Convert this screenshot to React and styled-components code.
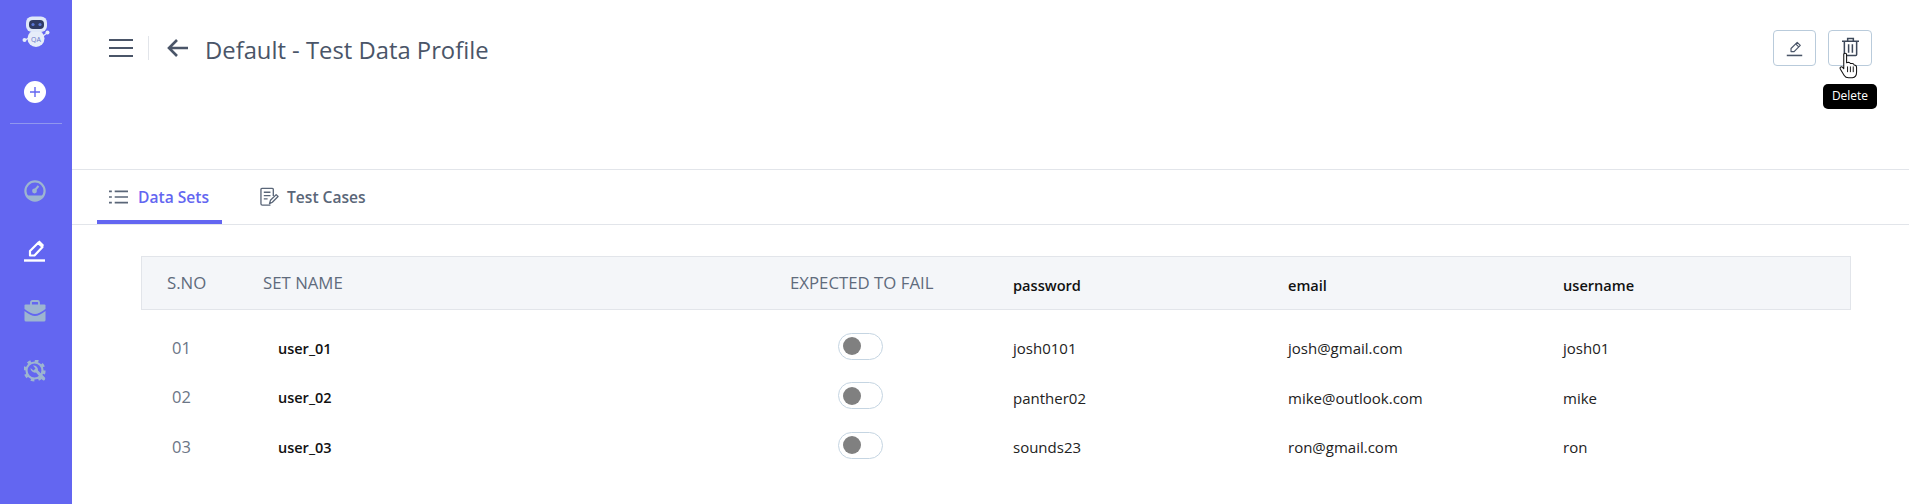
import React from 'react';
import styled, { createGlobalStyle } from 'styled-components';

const GlobalStyle = createGlobalStyle`
  html, body { margin: 0; padding: 0; background: #fff; }
  body { font-family: "Open Sans", "Noto Sans", "Liberation Sans", sans-serif; }
  * { box-sizing: border-box; }
`

const Page = styled.div`
  display: flex;
  width: 1909px;
  height: 504px;
  overflow: hidden;
`

const Sidebar = styled.aside`
  width: 72px;
  flex-shrink: 0;
  background: #6366f1;
  display: flex;
  flex-direction: column;
  align-items: center;
  padding-top: 16px;
`

const Logo = styled.svg`
  width: 34px;
  height: 32px;
  margin-left: 2px;
  display: block;
`

const AddButton = styled.button`
  width: 22px;
  height: 22px;
  border: 0;
  padding: 0;
  margin-top: 33px;
  margin-left: -3px;
  border-radius: 50%;
  background: #fff;
  display: flex;
  align-items: center;
  justify-content: center;
`

const SideDivider = styled.div`
  width: 52px;
  height: 1px;
  margin-top: 20px;
  background: rgba(200, 210, 235, 0.45);
`

const SideNav = styled.nav`
  display: flex;
  flex-direction: column;
  gap: 38px;
  margin-top: 56px;
  margin-left: -3px;
`

const SideIcon = styled.svg`
  width: 22px;
  height: 22px;
  display: block;
  color: ${(p) => (p.$active ? '#ffffff' : '#9db5d0')};
`

const Main = styled.main`
  flex: 1;
  min-width: 0;
  display: flex;
  flex-direction: column;
`

const Header = styled.header`
  height: 170px;
  flex-shrink: 0;
  border-bottom: 1px solid #e2e5ea;
  display: flex;
  align-items: flex-start;
  justify-content: space-between;
  padding: 30px 37px 0 37px;
`

const HeaderLeft = styled.div`
  display: flex;
  align-items: center;
  height: 36px;
`

const Burger = styled.svg`
  width: 24px;
  height: 20px;
  display: block;
`

const HeadDivider = styled.div`
  width: 1px;
  height: 24px;
  margin: 0 18px 0 15px;
  background: #e2e5ea;
`

const BackIcon = styled.svg`
  width: 22px;
  height: 20px;
  display: block;
  margin-right: 16px;
`

const Title = styled.h1`
  margin: 3px 0 0;
  font-size: 23.8px;
  font-weight: 500;
  color: #4a5568;
  white-space: nowrap;
`

const Actions = styled.div`
  display: flex;
  gap: 12px;
`

const ActionWrap = styled.div`
  position: relative;
`

const ActionButton = styled.button`
  width: ${(p) => p.$w}px;
  height: 36px;
  padding: 0;
  background: #fff;
  border: 1px solid #b9cbdb;
  border-radius: 4px;
  display: flex;
  align-items: center;
  justify-content: center;
`

const Tooltip = styled.div`
  position: absolute;
  top: 54px;
  left: -5px;
  width: 54px;
  height: 25px;
  border-radius: 5px;
  background: #000;
  color: #fff;
  font-size: 12px;
  font-weight: 500;
  line-height: 24px;
  text-align: center;
`

const HandCursor = styled.svg`
  position: absolute;
  top: 22px;
  left: 11px;
  width: 19px;
  height: 27px;
`

const Tabs = styled.div`
  height: 55px;
  flex-shrink: 0;
  border-bottom: 1px solid #e2e5ea;
  display: flex;
  padding-left: 25px;
`

const Tab = styled.div`
  height: 54px;
  display: flex;
  align-items: center;
  gap: ${(p) => p.$gap}px;
  padding: 3px 0 0 12px;
  width: ${(p) => p.$w}px;
  margin-right: ${(p) => p.$mr || 0}px;
  font-size: 15.6px;
  font-weight: 600;
  white-space: nowrap;
  color: ${(p) => (p.$active ? '#6366f1' : '#5a6678')};
  border-bottom: 4px solid ${(p) => (p.$active ? '#6366f1' : 'transparent')};
`

const TabIcon = styled.svg`
  width: 19px;
  height: 20px;
  flex-shrink: 0;
`

const TableWrap = styled.section`
  padding: 31px 0 0 69px;
`

const HeadRow = styled.div`
  width: 1710px;
  height: 54px;
  display: grid;
  grid-template-columns: 121px 527px 223px 275px 275px 1fr;
  align-items: center;
  background: #f4f6f9;
  border: 1px solid #e2e5ea;
  margin-bottom: 13px;
`

const HeadCell = styled.div`
  font-size: 16.8px;
  font-weight: 500;
  color: #5f6b7c;
  margin-top: -1px;
  padding-left: ${(p) => p.$pad || 0}px;
`

const KeyCell = styled.div`
  font-size: 14.6px;
  font-weight: 600;
  color: #111;
  margin-top: 3px;
`

const Row = styled.div`
  width: 1710px;
  height: 49.5px;
  display: grid;
  grid-template-columns: 122px 527px 223px 275px 275px 1fr;
  align-items: center;
`

const IndexCell = styled.div`
  padding-left: 31px;
  font-size: 16.5px;
  font-weight: 400;
  color: #6b7686;
  margin-top: -1px;
`

const NameCell = styled.div`
  padding-left: 15px;
  font-size: 14.5px;
  font-weight: 600;
  color: #111;
  margin-top: 1px;
`

const ValueCell = styled.div`
  font-size: 15px;
  font-weight: 500;
  color: #222;
  margin-top: 1px;
`

const ToggleCell = styled.div`
  padding-left: 48px;
  margin-top: -3px;
`

const Toggle = styled.div`
  width: 45px;
  height: 27px;
  border: 1px solid #c5d5e2;
  border-radius: 14px;
  background: #fff;
  display: flex;
  align-items: center;
  padding-left: 4px;
`

const Knob = styled.div`
  width: 18px;
  height: 18px;
  border-radius: 50%;
  background: #808080;
`

const rows = [
  { no: '01', name: 'user_01', password: 'josh0101', email: 'josh@gmail.com', username: 'josh01' },
  { no: '02', name: 'user_02', password: 'panther02', email: 'mike@outlook.com', username: 'mike' },
  { no: '03', name: 'user_03', password: 'sounds23', email: 'ron@gmail.com', username: 'ron' },
]

const PencilLine = ({ size, stroke, width }) => (
  <svg width={size} height={size} viewBox="0 0 22 22" fill="none" stroke={stroke} strokeWidth={width} strokeLinejoin="round">
    <path d="M6.5 15 L6.5 11 L14.5 3 L18.5 7 L10.5 15 Z" />
    <path d="M12.5 5 L16.5 9" />
    <path d="M1 20 H21" strokeWidth="2" />
  </svg>
)

export default function App() {
  return (
    <Page>
      <GlobalStyle />
      <Sidebar>
        <Logo viewBox="0 0 30 32">
          <circle cx="2.5" cy="24" r="2" fill="#e6edf9" />
          <circle cx="25.5" cy="16.5" r="2" fill="#e6edf9" />
          <path d="M3 24 L9 21 M25 17 L21 20" stroke="#e6edf9" strokeWidth="1.2" />
          <ellipse cx="14" cy="22.5" rx="8.5" ry="8.5" fill="#e6edf9" />
          <text x="14" y="25.5" textAnchor="middle" fontSize="7" fill="#6c78c8" fontFamily="Open Sans">QA</text>
          <rect x="4" y="0.5" width="21" height="15.5" rx="6" fill="#dfe8f8" />
          <rect x="7" y="4" width="15" height="9" rx="4" fill="#2e3a62" />
          <circle cx="11" cy="8.5" r="1.6" fill="#5b78d6" />
          <circle cx="18" cy="8.5" r="1.6" fill="#5b78d6" />
        </Logo>
        <AddButton>
          <svg width="10" height="10" viewBox="0 0 10 10" stroke="#6366f1" strokeWidth="1.4">
            <path d="M5 0 V10 M0 5 H10" />
          </svg>
        </AddButton>
        <SideDivider />
        <SideNav>
          <SideIcon viewBox="0 0 22 22">
            <circle cx="11" cy="11" r="9.6" fill="none" stroke="currentColor" strokeWidth="2.2" />
            <path d="M2.5 15.5 H19.5 A9.8 9.8 0 0 1 2.5 15.5 Z" fill="currentColor" />
            <circle cx="10.5" cy="11" r="2.4" fill="currentColor" />
            <path d="M10.5 10.5 L14.5 6" stroke="currentColor" strokeWidth="2" />
          </SideIcon>
          <SideIcon viewBox="0 0 22 22" $active>
            <path d="M6 15.5 V11 L14 3 L18.5 7 L10.5 15.5 Z" fill="none" stroke="currentColor" strokeWidth="2.2" strokeLinejoin="round" />
            <path d="M13.5 2 L15.5 0.5 L20 5 L18.5 7.5 Z" fill="currentColor" />
            <path d="M0 20.5 H21" stroke="currentColor" strokeWidth="2.4" />
          </SideIcon>
          <SideIcon viewBox="0 0 22 22">
            <path d="M7 5 V2.5 Q7 1 8.5 1 H13.5 Q15 1 15 2.5 V5" fill="none" stroke="currentColor" strokeWidth="1.8" />
            <path d="M1.5 4.5 H20.5 Q21.5 4.5 21.5 5.5 V9 Q15 14 11 14 Q7 14 0.5 9 V5.5 Q0.5 4.5 1.5 4.5 Z" fill="currentColor" />
            <path d="M0.5 11 Q7 16 11 16 Q15 16 21.5 11 V20 Q21.5 21.5 20 21.5 H2 Q0.5 21.5 0.5 20 Z" fill="currentColor" />
          </SideIcon>
          <SideIcon viewBox="0 0 22 22">
            <circle cx="10.5" cy="10.5" r="8" fill="none" stroke="currentColor" strokeWidth="2.2" />
            <circle cx="10.5" cy="10.5" r="9.8" fill="none" stroke="currentColor" strokeWidth="2.6" strokeDasharray="3.6 4.1" />
            <path d="M6.5 8 A4.5 4.5 0 0 0 12 12.5 L18 19.5 Q20 21.5 21 19.5 Q22 18 20 16.5 L14 10.5 A4.5 4.5 0 0 0 9 5.5 L11.5 8.5 L9.5 10.5 Z" fill="currentColor" />
          </SideIcon>
        </SideNav>
      </Sidebar>
      <Main>
        <Header>
          <HeaderLeft>
            <Burger viewBox="0 0 24 20" stroke="#4a5568" strokeWidth="2">
              <path d="M0 2 H24 M0 10 H24 M0 18 H24" />
            </Burger>
            <HeadDivider />
            <BackIcon viewBox="0 0 22 20" fill="none" stroke="#4a5568" strokeWidth="2.6">
              <path d="M21 10 H2 M10 2 L2 10 L10 18" />
            </BackIcon>
            <Title>Default - Test Data Profile</Title>
          </HeaderLeft>
          <Actions>
            <ActionButton $w={43}>
              <PencilLine size={17} stroke="#4a5568" width={1.5} />
            </ActionButton>
            <ActionWrap>
              <ActionButton $w={44}>
                <svg width="17" height="20" viewBox="0 0 18 20" fill="none" stroke="#3d4859" strokeWidth="1.6" style={{ marginTop: -2 }}>
                  <path d="M0 4 H18 M6 4 V1 H12 V4 M2.5 4 V18 Q2.5 19 3.5 19 H14.5 Q15.5 19 15.5 18 V4" />
                  <path d="M7 7 V16 M11 7 V16" />
                </svg>
              </ActionButton>
              <HandCursor viewBox="0 0 20 28">
                <path d="M5 2.5 Q5 1 6.5 1 Q8 1 8 2.5 V11 L10 10.5 Q11.5 10.5 12 12 L14 12 Q15.5 12 16 13.5 Q18.5 13.5 18.5 16 V21 Q18.5 26 14 27 H10 Q7 27 5.5 24.5 L1.5 18 Q0.5 16 2 15.5 Q3.5 15 5 17.5 Z" fill="#fff" stroke="#111" strokeWidth="1.1" strokeLinejoin="round" />
                <path d="M9 15 V21 M12 15 V21 M15 15 V21" stroke="#111" strokeWidth="1" />
              </HandCursor>
              <Tooltip>Delete</Tooltip>
            </ActionWrap>
          </Actions>
        </Header>
        <Tabs>
          <Tab $active $w={125} $mr={26} $gap={10}>
            <TabIcon viewBox="0 0 20 20" stroke="#5a6678" strokeWidth="1.8">
              <path d="M6 4 H20 M6 10 H20 M6 16 H20 M0 4 H3 M0 10 H3 M0 16 H3" />
            </TabIcon>
            Data Sets
          </Tab>
          <Tab $w={140} $gap={8}>
            <TabIcon viewBox="0 0 20 20" fill="none" stroke="#5a6678" strokeWidth="1.4" strokeLinejoin="round">
              <path d="M14 9 V2 Q14 1 13 1 H2 Q1 1 1 2 V17 Q1 18.5 2.5 18.5 H11" />
              <path d="M4 5 H11 M4 8.5 H11 M4 12 H8" />
              <path d="M10 17 L11 13.5 L17 7.5 L19 9.5 L13 15.5 Z" />
            </TabIcon>
            Test Cases
          </Tab>
        </Tabs>
        <TableWrap>
          <HeadRow>
            <HeadCell $pad={25}>S.NO</HeadCell>
            <HeadCell>SET NAME</HeadCell>
            <HeadCell>EXPECTED TO FAIL</HeadCell>
            <KeyCell>password</KeyCell>
            <KeyCell>email</KeyCell>
            <KeyCell>username</KeyCell>
          </HeadRow>
          {rows.map((row) => (
            <Row key={row.no}>
              <IndexCell>{row.no}</IndexCell>
              <NameCell>{row.name}</NameCell>
              <ToggleCell>
                <Toggle>
                  <Knob />
                </Toggle>
              </ToggleCell>
              <ValueCell>{row.password}</ValueCell>
              <ValueCell>{row.email}</ValueCell>
              <ValueCell>{row.username}</ValueCell>
            </Row>
          ))}
        </TableWrap>
      </Main>
    </Page>
  )
}
